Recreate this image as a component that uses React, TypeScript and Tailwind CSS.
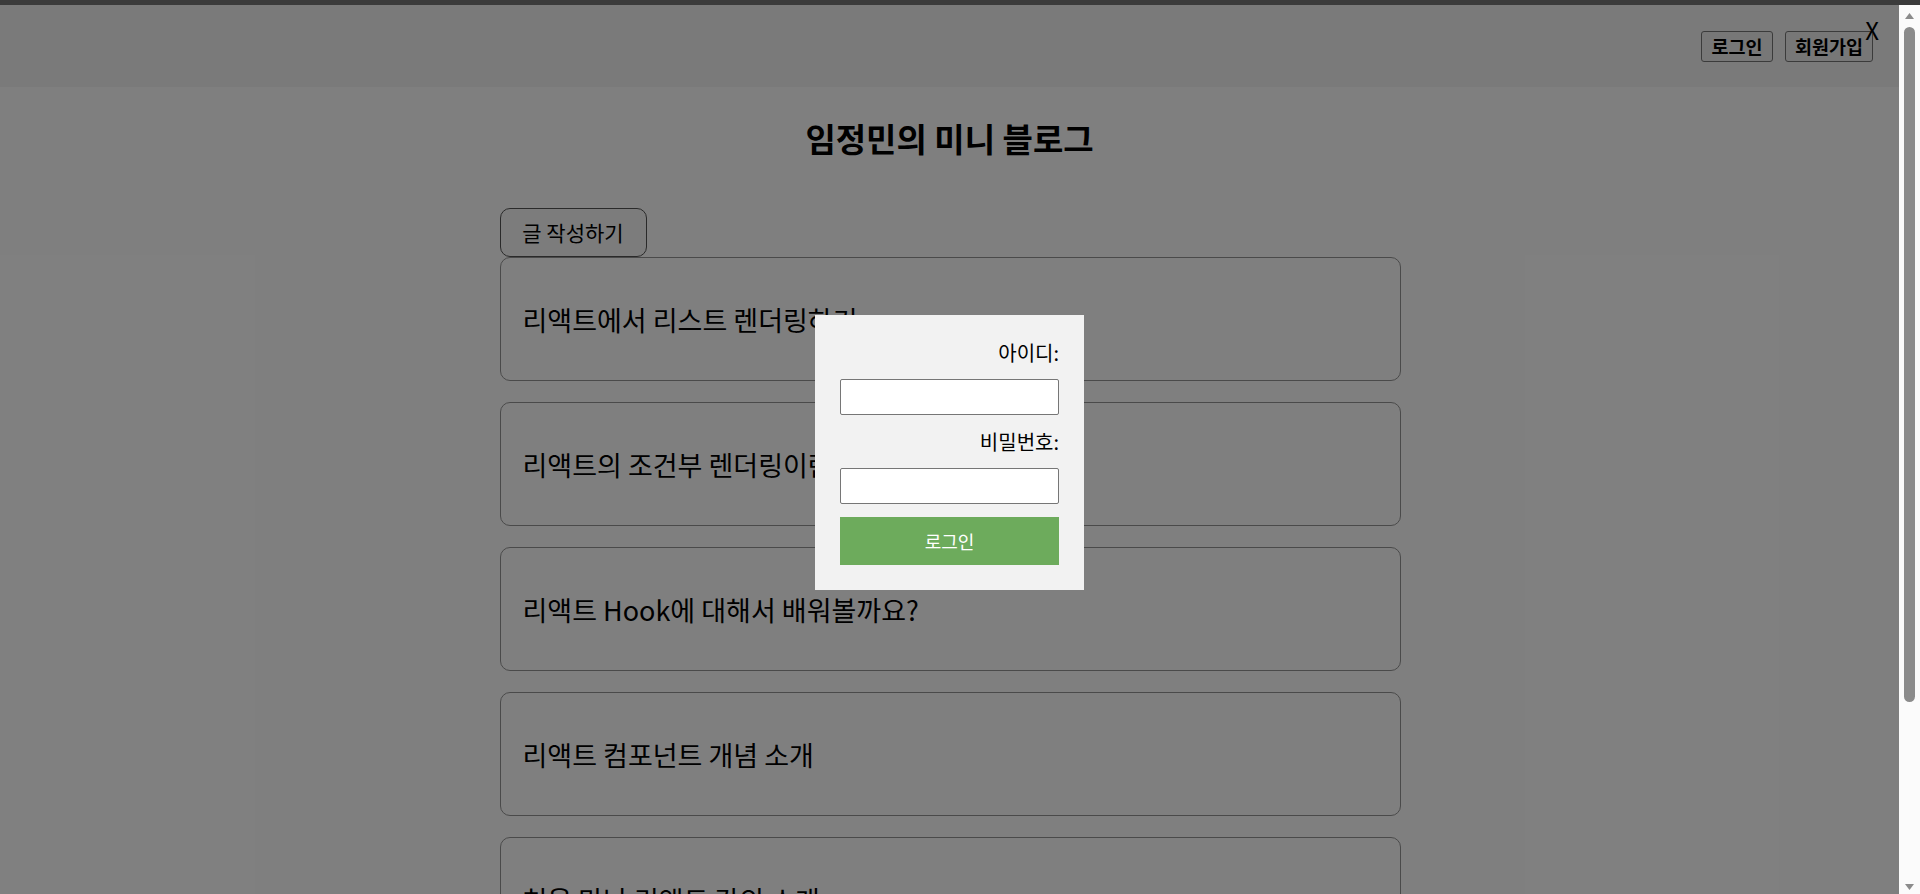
import { useState } from 'react';

/**
 * 미니 블로그 메인 페이지 (로그인 모달 열린 상태)
 */

const posts = [
  { id: 1, title: '리액트에서 리스트 렌더링하기' },
  { id: 2, title: '리액트의 조건부 렌더링이란?' },
  { id: 3, title: '리액트 Hook에 대해서 배워볼까요?' },
  { id: 4, title: '리액트 컴포넌트 개념 소개' },
  { id: 5, title: '처음 만난 리액트 강의 소개' },
  { id: 6, title: '리액트 State와 Props 알아보기' },
];

function ScrollBar() {
  return (
    <div className="w-[21px] shrink-0 bg-[#fbfbfb] flex flex-col items-center">
      <svg width="9" height="6" viewBox="0 0 9 6" className="mt-[8px]">
        <polygon points="4.5,0 9,6 0,6" fill="#8b8b8b" />
      </svg>
      <div className="mt-[8px] w-[11px] h-[675px] rounded-full bg-[#8b8b8b]" />
      <div className="flex-1" />
      <svg width="9" height="6" viewBox="0 0 9 6" className="mb-[4px]">
        <polygon points="0,0 9,0 4.5,6" fill="#8b8b8b" />
      </svg>
    </div>
  );
}

export default function App() {
  const [isLoginOpen, setIsLoginOpen] = useState(true);
  const [userId, setUserId] = useState('');
  const [password, setPassword] = useState('');

  return (
    <div className="h-screen flex flex-col font-['Noto_Sans_CJK_KR',sans-serif] text-black">
      <div className="h-[5px] shrink-0 bg-[#3b3b3b]" />

      <div className="flex-1 min-h-0 flex">
        <div className="relative flex-1 min-w-0 overflow-hidden bg-white">
          {/* 헤더 */}
          <header className="h-[82px] bg-[#f5f5f5] flex items-center justify-end gap-[12px] pr-[26px]">
            <button
              onClick={() => setIsLoginOpen(true)}
              className="w-[72px] h-[31px] bg-[#efefef] border border-[#767676] rounded-[3px] text-[18.5px] font-bold leading-none"
            >
              로그인
            </button>
            <button className="w-[88px] h-[31px] bg-[#efefef] border border-[#767676] rounded-[3px] text-[18.5px] font-bold leading-none">
              회원가입
            </button>
          </header>

          <h1 className="mt-[27px] text-center text-[33px] font-bold leading-[48px]">임정민의 미니 블로그</h1>

          {/* 글 목록 */}
          <main className="w-[902px] mx-auto mt-[46px] pb-[20px] pl-[1px]">
            <button className="w-[147px] h-[49px] bg-[#f8f8f8] border border-[#555] rounded-[10px] text-[21px] leading-none">
              글 작성하기
            </button>
            <div className="flex flex-col gap-[21px]">
              {posts.map(post => (
                <div
                  key={post.id}
                  className="h-[124px] shrink-0 flex items-center px-[22px] border border-[#949494] rounded-[10px] bg-white cursor-pointer"
                >
                  <span className="text-[27px] leading-none">{post.title}</span>
                </div>
              ))}
            </div>
          </main>

          {/* 로그인 모달 */}
          {isLoginOpen && (
            <div className="absolute inset-0 bg-black/50 flex items-center justify-center">
              <button
                onClick={() => setIsLoginOpen(false)}
                className="absolute top-[13px] right-[20px] text-[24px] leading-none"
              >
                X
              </button>
              <div className="mt-[6px] w-[269px] p-[25px] bg-[#f2f2f2] flex flex-col">
                <label className="text-right text-[20px] leading-[26px]">아이디:</label>
                <input
                  type="text"
                  value={userId}
                  onChange={e => setUserId(e.target.value)}
                  className="mt-[13px] h-[36px] bg-white border border-[#767676] rounded-[2px] px-2 outline-none"
                />
                <label className="mt-[14px] text-right text-[20px] leading-[26px]">비밀번호:</label>
                <input
                  type="password"
                  value={password}
                  onChange={e => setPassword(e.target.value)}
                  className="mt-[13px] h-[36px] bg-white border border-[#767676] rounded-[2px] px-2 outline-none"
                />
                <button className="mt-[13px] h-[48px] bg-[#6dab5c] text-white text-[18px] leading-none">
                  로그인
                </button>
              </div>
            </div>
          )}
        </div>

        <ScrollBar />
      </div>
    </div>
  );
}
